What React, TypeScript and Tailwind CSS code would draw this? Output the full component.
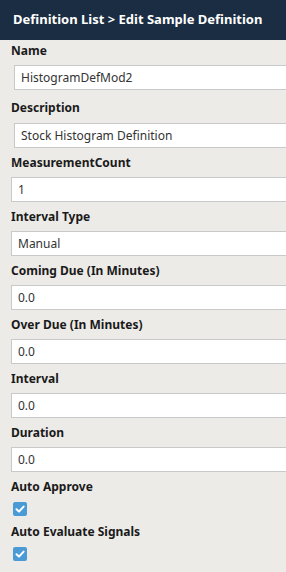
import type {ReactNode} from "react";

const font = {fontFamily: "'Noto Sans', 'Open Sans', sans-serif"};

function Label({children}: {children: ReactNode}) {
    return (
        <div className="h-[18px] text-[12px] leading-[18px] font-bold text-[#1a1a1a] whitespace-nowrap">
            {children}
        </div>
    );
}

function Field({
    label,
    value,
    className,
}: {
    label: string;
    value: string;
    className: string;
}) {
    return (
        <div className={className}>
            <Label>{label}</Label>
            <div className="mt-[5px] flex h-[25px] w-[300px] items-center border border-[#c9c9c9] bg-white pl-[6px] text-[12px] text-[#333]">
                {value}
            </div>
        </div>
    );
}

function Check() {
    return (
        <div className="mt-[6px] ml-[2px] flex h-[14px] w-[14px] items-center justify-center rounded-[2px] bg-[#4a9ad6]">
            <svg viewBox="0 0 14 14" className="h-[14px] w-[14px]">
                <path
                    d="M3.5 7.2 L6 9.6 L10.6 4.6"
                    fill="none"
                    stroke="white"
                    strokeWidth="2"
                    strokeLinecap="round"
                    strokeLinejoin="round"
                />
            </svg>
        </div>
    );
}

export default function App() {
    return (
        <div className="h-[572px] w-[286px] overflow-hidden bg-[#edebe8]" style={font}>

            {/* Header */}

            <div className="flex h-[40px] items-center bg-[#1b2d42] px-[13px] text-[13px] font-bold text-white whitespace-nowrap">
                Definition List &gt; Edit Sample Definition
            </div>

            {/* Form */}

            <div className="px-[11px] pt-[2px]">

                <div className="mb-[9px]">
                    <Label>Name</Label>
                    <div className="mt-[5px] ml-[3px] flex h-[25px] w-[300px] items-center border border-[#c9c9c9] bg-white pl-[6px] text-[12px] text-[#333]">
                        HistogramDefMod2
                    </div>
                </div>

                <div className="mb-[6px]">
                    <Label>Description</Label>
                    <div className="mt-[6px] ml-[3px] flex h-[25px] w-[300px] items-center border border-[#c9c9c9] bg-white pl-[6px] text-[12px] text-[#333]">
                        Stock Histogram Definition
                    </div>
                </div>

                <Field label="MeasurementCount" value="1" className="mb-[6px]" />
                <Field label="Interval Type" value="Manual" className="mb-[6px]" />
                <Field label="Coming Due (In Minutes)" value="0.0" className="mb-[6px]" />
                <Field label="Over Due (In Minutes)" value="0.0" className="mb-[6px]" />
                <Field label="Interval" value="0.0" className="mb-[6px]" />
                <Field label="Duration" value="0.0" className="mb-[6px]" />

                <div className="mb-[7px]">
                    <Label>Auto Approve</Label>
                    <Check />
                </div>

                <div>
                    <Label>Auto Evaluate Signals</Label>
                    <Check />
                </div>

            </div>
        </div>
    );
}
